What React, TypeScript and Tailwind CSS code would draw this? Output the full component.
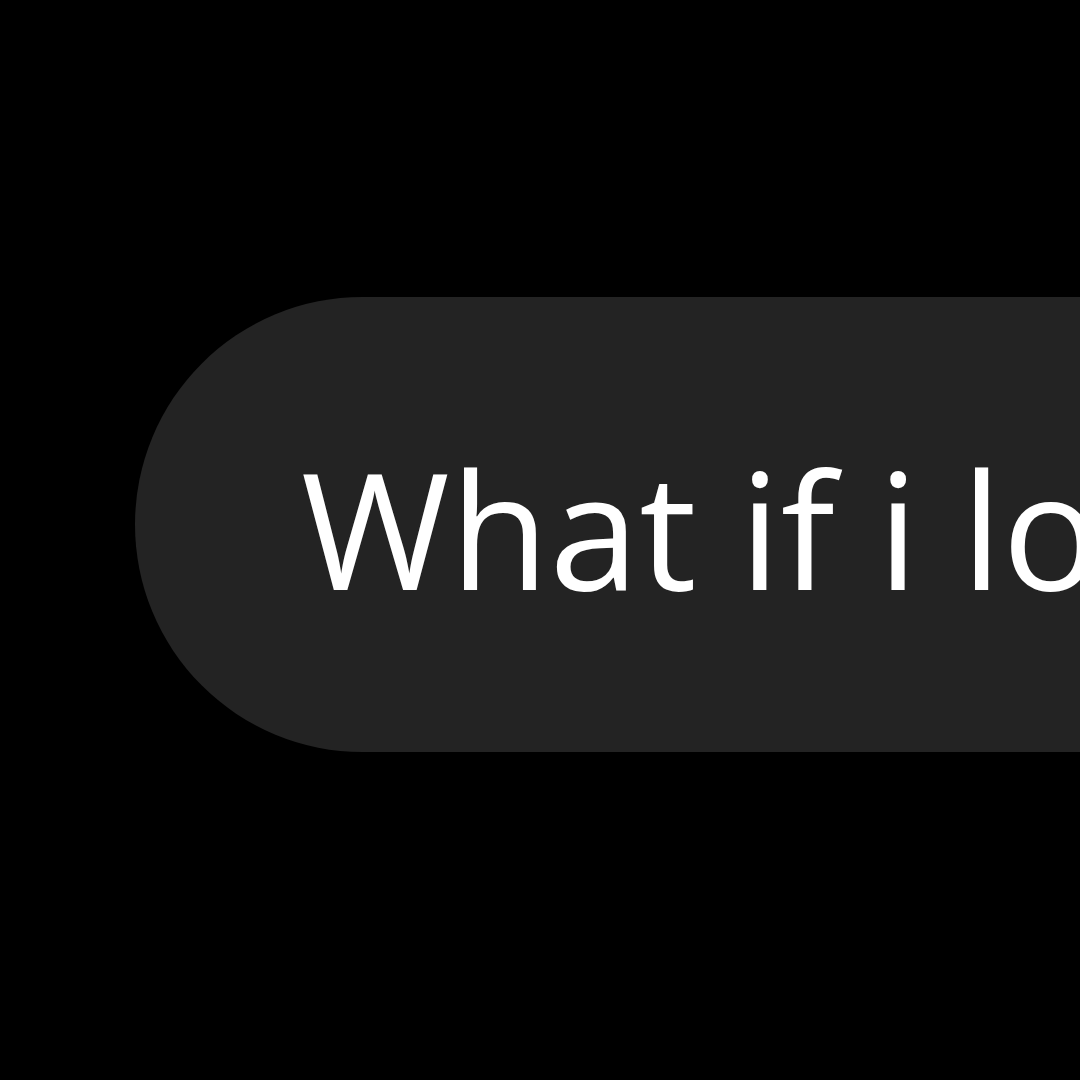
export default function App() {
  return (
    <div className="w-[1080px] h-[1080px] bg-black overflow-hidden flex items-start">
      <div className="mt-[297px] ml-[135px] h-[455px] w-[1400px] shrink-0 rounded-full bg-[#232323] flex items-center pl-[166px]">
        <span
          className="text-white text-[161px] leading-none whitespace-nowrap mt-[6px] tracking-[0.5px]"
          style={{ fontFamily: '"Open Sans", sans-serif' }}
        >
          What if i look
        </span>
      </div>
    </div>
  );
}
